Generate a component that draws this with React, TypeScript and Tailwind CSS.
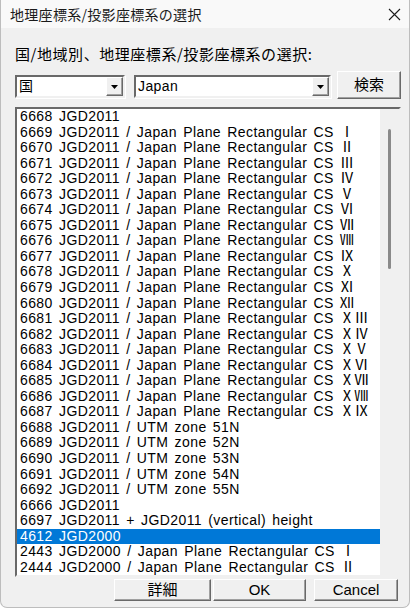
import React from 'react';

const items: string[] = [
  '6668 JGD2011',
  '6669 JGD2011 / Japan Plane Rectangular CS Ⅰ',
  '6670 JGD2011 / Japan Plane Rectangular CS Ⅱ',
  '6671 JGD2011 / Japan Plane Rectangular CS Ⅲ',
  '6672 JGD2011 / Japan Plane Rectangular CS Ⅳ',
  '6673 JGD2011 / Japan Plane Rectangular CS Ⅴ',
  '6674 JGD2011 / Japan Plane Rectangular CS Ⅵ',
  '6675 JGD2011 / Japan Plane Rectangular CS Ⅶ',
  '6676 JGD2011 / Japan Plane Rectangular CS Ⅷ',
  '6677 JGD2011 / Japan Plane Rectangular CS Ⅸ',
  '6678 JGD2011 / Japan Plane Rectangular CS Ⅹ',
  '6679 JGD2011 / Japan Plane Rectangular CS Ⅺ',
  '6680 JGD2011 / Japan Plane Rectangular CS Ⅻ',
  '6681 JGD2011 / Japan Plane Rectangular CS ⅩⅢ',
  '6682 JGD2011 / Japan Plane Rectangular CS ⅩⅣ',
  '6683 JGD2011 / Japan Plane Rectangular CS ⅩⅤ',
  '6684 JGD2011 / Japan Plane Rectangular CS ⅩⅥ',
  '6685 JGD2011 / Japan Plane Rectangular CS ⅩⅦ',
  '6686 JGD2011 / Japan Plane Rectangular CS ⅩⅧ',
  '6687 JGD2011 / Japan Plane Rectangular CS ⅩⅨ',
  '6688 JGD2011 / UTM zone 51N',
  '6689 JGD2011 / UTM zone 52N',
  '6690 JGD2011 / UTM zone 53N',
  '6691 JGD2011 / UTM zone 54N',
  '6692 JGD2011 / UTM zone 55N',
  '6666 JGD2011',
  '6697 JGD2011 + JGD2011 (vertical) height',
  '4612 JGD2000',
  '2443 JGD2000 / Japan Plane Rectangular CS Ⅰ',
  '2444 JGD2000 / Japan Plane Rectangular CS Ⅱ',
];

const selected = '4612 JGD2000';

const font = { fontFamily: '"Liberation Sans", "Noto Sans CJK JP", sans-serif' };
const jpFont = { fontFamily: '"Noto Sans CJK JP", sans-serif' };

function DropButton() {
  return (
    <div className="w-[17px] h-full flex items-center justify-center bg-[#f0f0f0] border border-t-white border-l-white border-b-[#696969] border-r-[#696969] shadow-[inset_-1px_-1px_0_#a0a0a0]">
      <svg width="7" height="4" viewBox="0 0 7 4">
        <path d="M0 0h7L3.5 4z" fill="#000" />
      </svg>
    </div>
  );
}

function Combo({ value, width }: { value: string; width: string }) {
  return (
    <div className={`${width} h-[23px] flex bg-white border-2 border-t-[#696969] border-l-[#696969] border-b-[#f0f0f0] border-r-[#f0f0f0] shadow-[1px_1px_0_#fff]`}>
      <div className="flex-1 flex items-center pl-[2px] text-[14px] text-black tracking-[0.4px]" style={font}>
        {value}
      </div>
      <DropButton />
    </div>
  );
}

function Button({ label, className }: { label: string; className: string }) {
  return (
    <div
      className={`${className} flex items-center justify-center bg-[#f0f0f0] border border-t-white border-l-white border-b-[#696969] border-r-[#696969] shadow-[inset_-1px_-1px_0_#a0a0a0] text-[15px] text-black`}
      style={font}
    >
      {label}
    </div>
  );
}

export default function App() {
  return (
    <div className="w-[410px] h-[610px] bg-white">
      <div className="w-[410px] h-[608px] bg-[#f0f0f0] border-l border-r border-b border-[#bdbdbd] rounded-b-[7px] overflow-hidden flex flex-col">
        {/* Title bar */}
        <div className="h-[28px] bg-[#f9f9f9] flex items-center justify-between pl-[9px] pr-[7px]">
          <span className="text-[14px] text-[#1b1b1b] tracking-[0.3px]" style={jpFont}>
            地理座標系/投影座標系の選択
          </span>
          <svg width="13" height="13" viewBox="0 0 13 13" className="mr-[1px]">
            <path d="M1 1L12 12M12 1L1 12" stroke="#1b1b1b" strokeWidth="1.1" />
          </svg>
        </div>

        {/* Body */}
        <div className="flex-1 flex flex-col pl-[14px] pr-[8px]">
          <div className="mt-[16px] h-[20px] flex items-center text-[15px] text-black tracking-[0.55px]" style={jpFont}>
            国/地域別、地理座標系/投影座標系の選択:
          </div>

          <div className="mt-[7px] flex items-center">
            <div className="mt-[3px] flex">
              <Combo value="国" width="w-[110px]" />
              <div className="w-[9px]" />
              <Combo value="Japan" width="w-[197px]" />
            </div>
            <Button label="検索" className="ml-[6px] w-[64px] h-[28px]" />
          </div>

          {/* List */}
          <div className="mt-[8px] h-[470px] flex bg-white border-2 border-t-[#696969] border-l-[#696969] border-b-[#f0f0f0] border-r-[#f0f0f0]">
            <div className="flex-1 overflow-hidden">
              {items.map((item) => (
                <div
                  key={item}
                  className={`h-[15.56px] leading-[15.56px] pl-[3px] text-[14px] whitespace-nowrap tracking-[0.4px] [word-spacing:2px] ${
                    item === selected ? 'bg-[#0078d7] text-white' : 'text-black'
                  }`}
                  style={font}
                >
                  {item}
                </div>
              ))}
            </div>
            <div className="w-[19px] bg-[#f0f0f0] flex justify-center pt-[20px]">
              <div className="w-[3px] h-[140px] rounded-full bg-[#8a8a8a]" />
            </div>
          </div>

          {/* Buttons */}
          <div className="mt-[2px] mr-[3px] flex justify-end">
            <Button label="詳細" className="w-[97px] h-[22px]" />
            <Button label="OK" className="ml-[2px] w-[93px] h-[22px]" />
            <Button label="Cancel" className="ml-[8px] w-[84px] h-[22px]" />
          </div>
        </div>
      </div>
    </div>
  );
}
